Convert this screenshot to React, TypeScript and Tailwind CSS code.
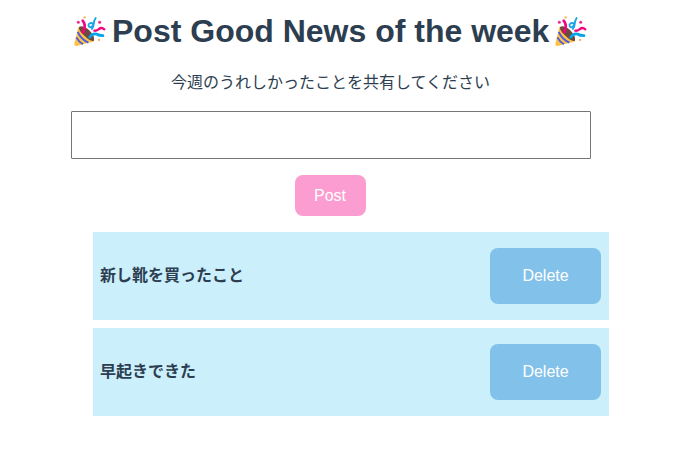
import { useState } from "react";

function PartyPopper() {
  return (
    <svg viewBox="0 0 96 96" className="h-8 w-8 shrink-0" fill="none" strokeLinecap="round" aria-hidden="true">
      <path d="M13 36 L1 86 Q0 94 8 93 L61 79 Z" fill="#fcc247" />
      <path d="M11 51 Q22 73 43 83 M7 67 Q14 80 27 88" stroke="#4b5be4" strokeWidth="5.5" strokeLinecap="butt" />
      <path d="M15 36 Q25 29 45 45 Q64 65 60 77 Q50 81 32 63 Q13 47 15 36 Z" fill="#6f483e" />
      <path d="M26 17 Q36 29 30 45 L27 52" stroke="#f4047f" strokeWidth="8" />
      <path d="M47 67 Q54 55 67 57 Q75 62 87 62" stroke="#06a4e9" strokeWidth="8" />
      <path d="M61 47 Q69 48 75 42 Q83 36 91 43" stroke="#f4047f" strokeWidth="7" />
      <path d="M65 9 Q59 18 59 28 Q58 37 54 42 M58 26 Q49 21 44 28 Q42 36 49 37 Q56 36 58 27" stroke="#1aa5e8" strokeWidth="5.5" strokeLinejoin="round" />
      <circle cx="32" cy="7" r="3.5" fill="#f9b84c" />
      <circle cx="75" cy="75" r="3.5" fill="#f9b84c" />
      <circle cx="13" cy="22" r="4.5" fill="#ef2d91" />
      <circle cx="77" cy="22" r="4.5" fill="#ef2d91" />
    </svg>
  );
}

export default function App() {
  const [posts, setPosts] = useState(["新し靴を買ったこと", "早起きできた"]);
  const [text, setText] = useState("");

  function addPost() {
    if (!text.trim()) return;
    setPosts([...posts, text]);
    setText("");
  }

  return (
    <main className="min-h-screen bg-white pt-[13px] font-['Liberation_Sans','Noto_Sans_CJK_JP',sans-serif] text-[#2c3e50]">
      <div className="ml-[71px] flex w-[520px] flex-col items-center">
        <h1 className="flex h-9 items-center gap-[6px] self-start pl-[3px] text-[32px] leading-9 font-bold whitespace-nowrap">
          <PartyPopper />
          <span>Post Good News of the week</span>
          <PartyPopper />
        </h1>
        <p className="mt-[22px] mr-px h-6 text-base leading-6">今週のうれしかったことを共有してください</p>
        <input
          aria-label="news"
          value={text}
          onChange={(e) => setText(e.target.value)}
          className="mt-4 h-12 w-full rounded-[1px] border border-[#767676] px-2"
        />
        <button onClick={addPost} className="mt-4 mr-[2px] h-[41px] w-[71px] rounded-lg bg-[#fb9dd0] text-base text-white">
          Post
        </button>
      </div>
      <ul className="mt-4 ml-[93px] flex w-[516px] flex-col gap-2">
        {posts.map((post, i) => (
          <li key={i} className="flex h-[88px] items-center justify-between bg-[#cbeffb] pr-2 pl-[7px]">
            <span className="text-base font-bold">{post}</span>
            <button
              onClick={() => setPosts(posts.filter((_, j) => j !== i))}
              className="h-14 w-[111px] rounded-lg bg-[#82c1ea] text-base text-white"
            >
              Delete
            </button>
          </li>
        ))}
      </ul>
    </main>
  );
}
